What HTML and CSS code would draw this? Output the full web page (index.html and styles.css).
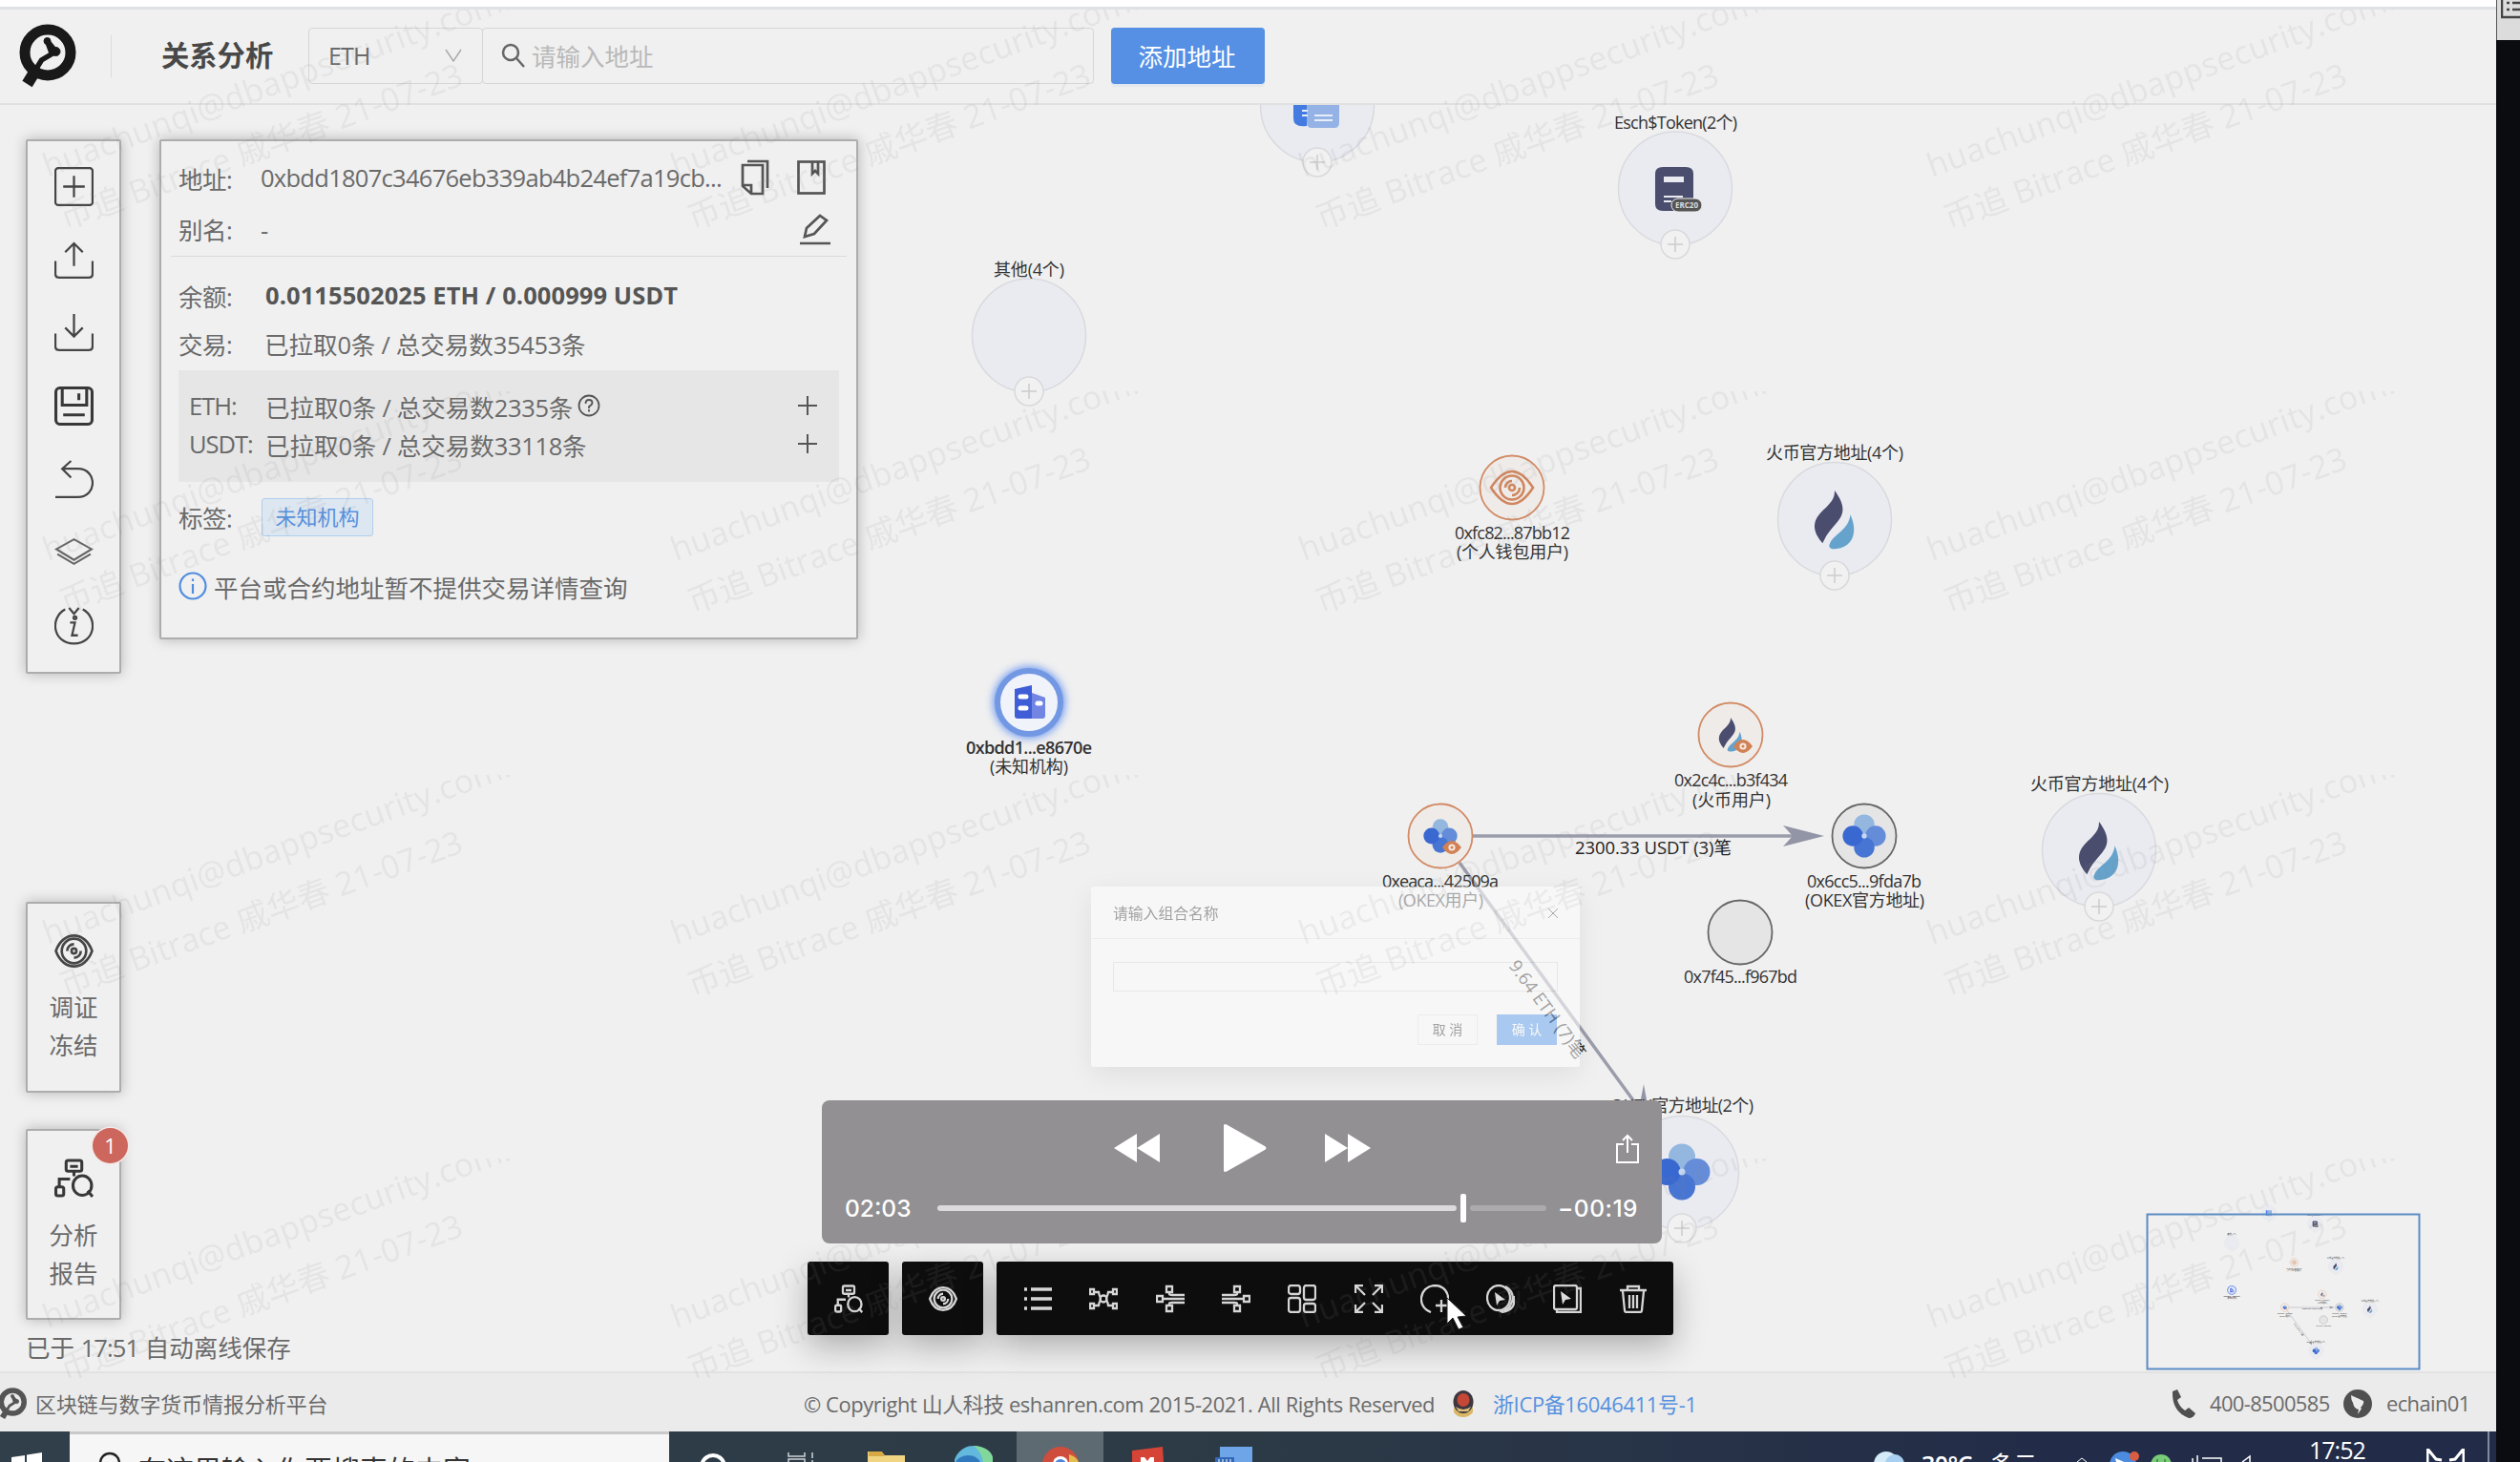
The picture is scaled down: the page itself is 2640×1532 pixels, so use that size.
FILE: index.html
```
<!DOCTYPE html>
<html lang="zh-CN">
<head>
<meta charset="utf-8">
<title>关系分析</title>
<link rel="stylesheet" href="styles.css">
</head>
<body>
<svg class="defs" width="0" height="0" aria-hidden="true">
  <defs>
    <symbol id="i-plusbox" viewBox="0 0 40 40"><rect x="1" y="1" width="38" height="38" rx="3"/><path d="M20 9v22M9 20h22"/></symbol>
    <symbol id="i-upload" viewBox="0 0 40 40"><path d="M1 21v13q0 4 4 4h30q4 0 4-4V21M20 26V3M11 12l9-9 9 9"/></symbol>
    <symbol id="i-download" viewBox="0 0 40 40"><path d="M1 21v13q0 4 4 4h30q4 0 4-4V21M20 1v23M11 15l9 9 9-9"/></symbol>
    <symbol id="i-save" viewBox="0 0 40 40"><rect x="1.5" y="1.5" width="37" height="37" rx="4"/><path d="M8 2v17h25V2M25 7v7M9 29h22"/></symbol>
    <symbol id="i-undo" viewBox="0 0 40 40"><path d="M1 38h23c20 0 20-29 0-29H8M17 1L8 9l9 9"/></symbol>
    <symbol id="i-layers" viewBox="0 0 40 40"><path d="M20 7L38 17 20 28 2 17zM3 22l17 10 17-10"/></symbol>
    <symbol id="i-info" viewBox="0 0 40 40"><path d="M11 3.500C-5 12-2 38 20 38.500 42 38 45 12 29 3.500M15 2l5 6 5-6M16 17h5l-3 13h6"/><circle cx="21" cy="12" r="1.500"/></symbol>
    <symbol id="i-eye" viewBox="0 0 40 40"><path d="M1.500 20C9-1 31-1 38.500 20 31 41 9 41 1.500 20z"/><circle cx="20" cy="20" r="12.500"/><path d="M13 20a7 7 0 0 1 7-7M27 20a7 7 0 0 1-7 7"/><circle cx="20" cy="20" r="2.500"/></symbol>
    <symbol id="i-report" viewBox="0 0 40 40"><rect x="12" y="2" width="16" height="11" rx="2"/><path d="M16 8h8M20 13v5M5 30V21h11M34 33l5 6"/><rect x="1.500" y="29" width="8" height="9" rx="2"/><ellipse cx="28.500" cy="27.500" rx="9.500" ry="10"/></symbol>
    <symbol id="i-copy" viewBox="0 0 30 36"><path d="M2 5h21v30H11l-9-8zM2 26h9v9M7 1h21v28"/></symbol>
    <symbol id="i-book" viewBox="0 0 30 36"><rect x="1.500" y="1.500" width="27" height="33"/><path d="M16 2v12l3-3 3 3V2"/></symbol>
    <symbol id="i-edit" viewBox="0 0 34 34"><path d="M6 24l2-9L22 2l7 5-13 14zM1 31h32"/></symbol>
    <symbol id="i-logo" viewBox="0 0 60 68"><path d="M17 50L9 63" stroke-width="12"/><circle cx="30.500" cy="30" r="24" stroke-width="11"/><path d="M30 18l9 11-15 9-8 13M30 18l4 11 5 1" stroke-width="5.500"/><circle cx="30" cy="18" r="3.500"/><circle cx="39" cy="29" r="4.500"/></symbol>
    <symbol id="n-flame" viewBox="0 0 44 64"><path d="M22 0c16 22 7 29-3 41-6 7-8 12-10 16C-5 41-1 30 13 18c7-7 9-11 9-18z" fill="#4a4d6d"/><path d="M39 26c8 17 4 35-15 37-5 1-10-1-7-6 5-11 20-14 22-31z" fill="#66a3cc"/></symbol>
    <symbol id="n-okex" viewBox="0 0 60 60"><circle cx="30" cy="14.500" r="14" fill="#94b7df"/><circle cx="45.500" cy="30" r="14" fill="#658cd8"/><circle cx="30" cy="45.500" r="14" fill="#4775d3"/><circle cx="14.500" cy="30" r="14" fill="#3968d1"/><circle cx="30" cy="30" r="3.500" fill="#c5d7f2"/></symbol>
    <symbol id="n-eye" viewBox="0 0 20 14"><path d="M0 7q10-14 20 0-10 14-20 0z" fill="#d18154"/><circle cx="10" cy="7" r="3.600" fill="#f6e7de"/><circle cx="10" cy="7" r="1.500" fill="#d18154"/></symbol>
    <symbol id="n-add" viewBox="0 0 32 32"><circle cx="16" cy="16" r="15" fill="#f1f1f2" stroke="#d9d9dc" stroke-width="1.500"/><path d="M16 8v16M8 16h16" stroke="#ccc" stroke-width="1.500"/></symbol>
    <pattern id="wm" width="658" height="402" patternUnits="userSpaceOnUse" y="-2">
      <g class="wm-text">
        <text transform="translate(50 178) rotate(-20)" textLength="556">huachunqi@dbappsecurity.com.cn</text>
        <text transform="translate(68 233) rotate(-20)" textLength="446">币追 Bitrace 戚华春 21-07-23</text>
      </g>
    </pattern>
  </defs>
</svg>

<div class="screen">
  <div class="desktop">
    <div class="chrome-edge"></div>
    <div class="app">
      <header class="header">
        <svg class="logo"><use href="#i-logo"/></svg>
        <i class="sep"></i>
        <h1>关系分析</h1>
        <div class="select"><span>ETH</span><svg viewBox="0 0 18 14" width="18" height="14"><path d="M1 1l8 12 8-12"/></svg></div>
        <div class="search"><svg viewBox="0 0 26 26" width="26" height="26"><circle cx="10" cy="10" r="8"/><path d="M16 16l8 9"/></svg><span>请输入地址</span></div>
        <button class="add">添加地址</button>
      </header>

      <main class="work">
        <svg class="graph" width="2616" height="1327" viewBox="0 110 2616 1327">
          <g id="graph">
            <g class="edge"><path d="M1543 876h350M1529 904L1722 1168"/><path class="head" d="M1911 876l-43-11 10 11-10 11zM1730 1180l-8-44-5 26-18-2z"/></g>
            <g class="label">
              <text class="halo" x="1650" y="895" textLength="164">2300.33 USDT (3)笔</text>
              <text class="halo" transform="translate(1580 1012) rotate(54)" textLength="122">9.64 ETH (7)笔</text>
            </g>
            <g class="group">
              <circle cx="1380" cy="110.500" r="59.500"/><circle cx="1755" cy="197.500" r="59.500"/><circle cx="1078" cy="351.500" r="59.500"/>
              <circle cx="1922" cy="544" r="59.500"/><circle cx="2199" cy="891" r="59.500"/><circle cx="1762" cy="1229" r="59.500"/>
            </g>
            <path d="M1355 88h14v44q-14 2-14-8z" fill="#447be0"/><path d="M1369 88h34v40q0 6-5 6h-24q-5 0-5-6z" fill="#94b2e6"/><path d="M1377 121h19M1377 126h19M1364 116h6M1364 121h6" stroke="#e8eef9" stroke-width="2"/>
            <path d="M1742 175h24q8 0 8 7v32q0 7-8 7h-24q-8 0-8-7v-32q0-7 8-7z" fill="#4a4d6d"/><path d="M1743 185h21v6h-21z" fill="#e8e9f1"/><path d="M1743 206h20M1743 211h8" stroke="#e8e9f1" stroke-width="2"/>
            <rect x="1751" y="208" width="32" height="14" rx="7" fill="#555" stroke="#eee"/><text class="erc" x="1755" y="218" textLength="24">ERC20</text>
            <use href="#n-flame" x="1900" y="514" width="44" height="62"/><use href="#n-flame" x="2177" y="861" width="44" height="62"/>
            <use href="#n-okex" x="1731" y="1198" width="62" height="60"/>
            <g><use href="#n-add" x="1364" y="154" width="32" height="32"/><use href="#n-add" x="1739" y="240" width="32" height="32"/><use href="#n-add" x="1062" y="394" width="32" height="32"/><use href="#n-add" x="1906" y="587" width="32" height="32"/><use href="#n-add" x="2183" y="934" width="32" height="32"/><use href="#n-add" x="1746" y="1271" width="32" height="32"/></g>
            <g class="user"><circle cx="1584" cy="511" r="33.500"/><circle cx="1813" cy="770" r="33.500"/><circle cx="1509" cy="876" r="33.500"/></g>
            <g class="official"><circle cx="1953" cy="876" r="33.500"/><circle cx="1823" cy="977" r="33.500"/></g>
            <g fill="none" stroke="#d0875f" stroke-width="2.600"><path d="M1562 511q22-34 44 0-22 34-44 0z"/><circle cx="1584" cy="511" r="12.500"/><path d="M1577 511a7 7 0 0 1 7-7M1592 511a8 8 0 0 1-8 8"/><circle cx="1584" cy="511" r="3"/></g>
            <use href="#n-flame" x="1798" y="752" width="30" height="36"/><use href="#n-eye" x="1816" y="775" width="20" height="14"/>
            <use href="#n-okex" x="1491" y="858" width="36" height="36"/><use href="#n-eye" x="1511" y="881" width="20" height="14"/>
            <use href="#n-okex" x="1930" y="853" width="46" height="46"/>
            <circle class="glow" cx="1078" cy="736" r="37"/><circle cx="1078" cy="736" r="33" fill="#f1f3fb" stroke="#7398e3" stroke-width="6"/>
            <path d="M1063 722l18-4v35h-15q-3 0-3-3z" fill="#3f5dd6"/><path d="M1081 726l14 5v19q0 3-3 3h-11z" fill="#7285e3"/><path d="M1069 730h6M1069 742h6M1087 737h3" stroke="#fff" stroke-width="5" stroke-linecap="round"/>
            <g class="label">
              <text x="1691" y="135" textLength="129">Esch$Token(2个)</text>
              <text x="1041" y="289" textLength="74">其他(4个)</text>
              <text x="1524" y="565" textLength="121">0xfc82...87bb12</text><text x="1526" y="585" textLength="117">(个人钱包用户)</text>
              <text x="1850" y="481" textLength="144">火币官方地址(4个)</text>
              <text class="strong" x="1012" y="790" textLength="132">0xbdd1...e8670e</text><text x="1037" y="810" textLength="82">(未知机构)</text>
              <text x="1754" y="824" textLength="119">0x2c4c...b3f434</text><text x="1773" y="845" textLength="82">(火币用户)</text>
              <text x="1448" y="930" textLength="122">0xeaca...42509a</text><text x="1465" y="950" textLength="89">(OKEX用户)</text>
              <text x="1893" y="930" textLength="120">0x6cc5...9fda7b</text><text x="1891" y="950" textLength="125">(OKEX官方地址)</text>
              <text x="1764" y="1030" textLength="119">0x7f45...f967bd</text>
              <text x="2127" y="828" textLength="145">火币官方地址(4个)</text>
              <text x="1687" y="1165" textLength="150">OKEX官方地址(2个)</text>
            </g>
          </g>
        </svg>
        <svg class="minimap" width="288" height="176" viewBox="2248 1260 288 176">
          <use href="#graph" transform="translate(2199 1257) scale(.129)"/>
          <rect x="2249.500" y="1272.500" width="285" height="162"/>
        </svg>

        <div class="left">
          <nav class="card tools">
            <svg><use href="#i-plusbox"/></svg><svg><use href="#i-upload"/></svg><svg><use href="#i-download"/></svg><svg class="bold"><use href="#i-save"/></svg><svg><use href="#i-undo"/></svg><svg class="thin"><use href="#i-layers"/></svg><svg><use href="#i-info"/></svg>
          </nav>
          <div class="card act"><svg><use href="#i-eye"/></svg><span>调证<br>冻结</span></div>
          <div class="card act report"><b class="badge">1</b><svg class="bold"><use href="#i-report"/></svg><span>分析<br>报告</span></div>
          <p class="saved">已于 <span class="n">17:51</span> 自动离线保存</p>
        </div>

        <section class="card detail">
          <div class="row r1"><label>地址:</label><span class="addr">0xbdd1807c34676eb339ab4b24ef7a19cb...</span><svg width="30" height="38"><use href="#i-copy"/></svg><svg width="30" height="38"><use href="#i-book"/></svg></div>
          <div class="row r2"><label>别名:</label><span>-</span><svg class="end" width="34" height="34"><use href="#i-edit"/></svg></div>
          <div class="row r3"><label>余额:</label><strong>0.0115502025 ETH / 0.000999 USDT</strong></div>
          <div class="row r4"><label>交易:</label><span>已拉取<i>0</i>条<i> / </i>总交易数<i>35453</i>条</span></div>
          <div class="coins">
            <div class="row"><label>ETH:</label><span>已拉取<i>0</i>条<i> / </i>总交易数<i>2335</i>条</span><svg class="help" viewBox="0 0 24 24" width="24" height="24"><circle cx="12" cy="12" r="10.500"/><path d="M8.500 10q0-4 3.500-4t3.500 3q0 2-3.500 4v2M12 16v2.500"/></svg><svg class="end" viewBox="0 0 22 22" width="22" height="22"><path d="M11 1v20M1 11h20"/></svg></div>
            <div class="row"><label>USDT:</label><span>已拉取<i>0</i>条<i> / </i>总交易数<i>33118</i>条</span><svg class="end" viewBox="0 0 22 22" width="22" height="22"><path d="M11 1v20M1 11h20"/></svg></div>
          </div>
          <div class="row r5"><label>标签:</label><em>未知机构</em></div>
          <div class="row r6"><svg class="blue" viewBox="0 0 30 30" width="30" height="30"><circle cx="15" cy="15" r="13.500"/><path d="M15 13v10M15 7.500v2.500"/></svg><span>平台或合约地址暂不提供交易详情查询</span></div>
        </section>

        <div class="modal">
          <div class="m-head"><span>请输入组合名称</span><svg viewBox="0 0 12 12" width="12" height="12"><path d="M1 1l10 10M11 1L1 11"/></svg></div>
          <div class="m-body"><div class="m-input"></div></div>
          <div class="m-foot"><span>取 消</span><span class="ok">确 认</span></div>
        </div>

        <div class="dock">
          <div class="d-box"><svg class="bold"><use href="#i-report"/></svg></div>
          <div class="d-box"><svg class="bold"><use href="#i-eye"/></svg></div>
          <div class="d-bar">
            <svg viewBox="0 0 30 30"><path stroke-width="3.500" d="M1 5h3M8 5h22M1 15h3M8 15h22M1 25h3M8 25h22"/></svg>
            <svg viewBox="0 0 30 30"><path d="M5 8h5q1 6 3 6M25 8h-5q-1 6-3 6M5 22h5q1-6 3-6M25 22h-5q-1-6-3-6"/><circle cx="15" cy="15" r="3.500"/><path d="M1 5h4v5H1zM25 5h4v5h-4zM1 20h4v5H1zM25 20h4v5h-4z"/></svg>
            <svg viewBox="0 0 30 30"><path d="M1 12h6v6H1zM11 2h6v6h-6zM11 22h6v6h-6zM7 15h23M14 8v2q0 1 3 1h13M14 22v-2q0-1 3-1h13"/></svg>
            <svg viewBox="0 0 30 30"><path d="M23 12h6v6h-6zM13 2h6v6h-6zM13 22h6v6h-6zM23 15H0M16 8v2q0 1-3 1H0M16 22v-2q0-1-3-1H0"/></svg>
            <svg viewBox="0 0 30 30"><rect x="1" y="1" width="12" height="9" rx="2.500"/><rect x="17" y="1" width="12" height="15" rx="2.500"/><rect x="1" y="14" width="12" height="15" rx="2.500"/><rect x="17" y="20" width="12" height="9" rx="2.500"/></svg>
            <svg viewBox="0 0 30 30"><path d="M1 9V1h8M1 1l10 10M21 1h8v8M29 1L19 11M1 21v8h8M1 29l10-10M29 21v8h-8M29 29L19 19"/></svg>
            <svg viewBox="0 0 30 30"><path d="M11 29C-4 24-2 2 15 1c10 0 15 8 14 16M22 16v13M16 22h13"/></svg>
            <svg viewBox="0 0 30 30"><ellipse cx="13" cy="14" rx="12" ry="13"/><path d="M20 2q10 6 7 16-4 11-13 10M16 29q16-2 13-17"/><path class="fill" d="M9 8l11 8-6 1-3 5z"/></svg>
            <svg viewBox="0 0 30 30"><rect x="1" y="1" width="24" height="25" rx="2"/><path d="M26 4h3v25H4v-3"/><path class="fill" d="M8 7l11 8-6 1-3 5z"/></svg>
            <svg viewBox="0 0 30 30"><path d="M1 6h28M9 6V2h12v4M4 7l2 20q0 2 2 2h14q2 0 2-2l2-20M11 11v14M15 11v14M19 11v14"/></svg>
          </div>
        </div>
      </main>

      <footer class="footer">
        <svg class="f-logo"><use href="#i-logo"/></svg><span class="f-name">区块链与数字货币情报分析平台</span>
        <span class="f-copy">© Copyright 山人科技 eshanren.com 2015-2021. All Rights Reserved</span>
        <svg class="emblem" viewBox="0 0 24 28" width="24" height="28"><path d="M2 18q10 6 20 0v5q-4 5-10 5T2 23z" fill="#d9b765"/><ellipse cx="12" cy="12" rx="10.500" ry="12" fill="#3f3740"/><ellipse cx="12" cy="10" rx="6.500" ry="7" fill="#c44835"/><path d="M4 17q8 6 16 0l-3 5H7z" fill="#e0c27a"/></svg>
        <a>浙ICP备16046411号-1</a>
        <svg class="phone" viewBox="0 0 26 30" width="26" height="30"><path d="M1 2l5-2 4 8-4 3q2 7 8 11l4-3 7 6q-2 5-7 5Q0 23 1 2z"/></svg><span class="f-tel">400-8500585</span>
        <svg class="ding" viewBox="0 0 30 30" width="30" height="30"><circle cx="15" cy="15" r="15"/><path fill="#ececec" d="M8 6q9 4 13 6 1 3-3 7l1 1-4 6 1-5q-5-1-6-7-2-3-2-8z"/></svg><span class="f-id">echain01</span>
      </footer>
      <svg class="watermark" width="2616" height="1442"><rect width="2616" height="1442" fill="url(#wm)"/></svg>
    </div>

    <div class="taskbar">
      <div class="start"><svg viewBox="0 0 32 32" width="32" height="32"><path d="M0 5l14-2v13H0zM16 2.500L32 0v16H16z" fill="#fff"/></svg></div>
      <div class="t-search"><svg viewBox="0 0 26 26" width="26" height="26"><circle cx="14" cy="12" r="10"/></svg><span>在这里输入你要搜索的内容</span></div>
      <div class="apps">
        <span><svg viewBox="0 0 40 17"><circle cx="20" cy="22" r="12" fill="none" stroke="#fff" stroke-width="4"/></svg></span>
        <span><svg viewBox="0 0 40 17"><path d="M8 7v4h17V7M8 17v-3h17v3M33 7v6M33 15v2" fill="none" stroke="#cfd4d8" stroke-width="1.500"/></svg></span>
        <span><svg viewBox="0 0 40 17"><path d="M0 17V6h14l4 4h21v7z" fill="#f1d583"/><path d="M1 6h14l3 5H1z" fill="#d7aa45"/></svg></span>
        <span><svg viewBox="0 0 40 17"><circle cx="20" cy="21" r="21" fill="#62b9dd"/><path d="M20 0q20 1 21 17H30Q28 6 20 0z" fill="#82d79b"/><ellipse cx="14" cy="19" rx="13" ry="9" fill="#3179bd"/></svg></span>
        <span class="on"><svg viewBox="0 0 40 17"><circle cx="20" cy="20" r="19" fill="#cf4d3d"/><path d="M29 9q9 3 10 9H29z" fill="#e2bd4e"/><circle cx="20" cy="19" r="8" fill="#fff"/><circle cx="20" cy="20" r="6" fill="#4d85dc"/></svg></span>
        <span><svg viewBox="0 0 40 17"><path d="M4 5l32-4 1 16H4z" fill="#d54436"/><path d="M13 17v-5h4l3 4 3-4h4v5z" fill="#fff"/></svg></span>
        <span><svg viewBox="0 0 40 17"><path d="M5 1h34v16H5z" fill="#6ea5e8"/><path d="M0 12h20v5H0z" fill="#3368b8"/><path d="M4 14v3M8 14v3M12 14v3M16 14v3" stroke="#fff"/></svg></span>
      </div>
      <div class="tray">
        <svg viewBox="0 0 34 12" width="34" height="12"><circle cx="15" cy="14" r="13" fill="#d5ebf8"/><circle cx="24" cy="14" r="10" fill="#a9cff0"/></svg>
        <span class="temp"><b>30°C</b>多云</span>
        <svg class="mini" viewBox="0 0 190 12" width="190" height="12"><path d="M2 12l5-4 5 4" fill="none" stroke="#fff"/><circle cx="50" cy="15" r="14" fill="#4b8be0"/><path d="M42 8l14 6-12 2z" fill="#fff"/><circle cx="62" cy="6" r="5" fill="#d85e43"/><circle cx="90" cy="15" r="11" fill="#78cc78"/><path d="M86 9v3M94 9v3" stroke="#285b2b"/><path d="M123 8v4M128 5v7M133 8h20v4M175 12l8-6v6" fill="none" stroke="#fff" stroke-width="1.500"/></svg>
        <span class="clock">17:52</span>
        <svg class="bell" viewBox="0 0 40 14" width="40" height="14"><path d="M1 14V0l9 11 6 1M39 14V0l-9 11-6 1" fill="none" stroke="#fff" stroke-width="3"/></svg>
      </div>
    </div>
  </div>
  <aside class="side"><div><svg viewBox="0 0 20 24" width="20" height="24"><path d="M20 -2H1v20h19M6 3h3M12 3h8M6 10h3M12 10h8" fill="none" stroke="#444" stroke-width="2.500"/></svg></div></aside>

  <div class="player">
    <div class="p-top">
      <svg width="48" height="30" viewBox="0 0 48 30"><path d="M24 0v30L0 15zM48 0v30L24 15z"/></svg>
      <svg width="46" height="50" viewBox="0 0 46 50"><path d="M1 1q1-2 4 0l39 22q3 2 0 4L5 49q-3 2-4 0z"/></svg>
      <svg width="48" height="30" viewBox="0 0 48 30"><path d="M0 0v30l24-15zM24 0v30l24-15z"/></svg>
      <svg class="share" width="24" height="31" viewBox="0 0 24 31"><path d="M8 11H1v19h22V11h-7M12 20V2M7 7l5-5 5 5"/></svg>
    </div>
    <div class="p-bar"><span>02:03</span><div class="track"><i class="done"></i><i class="knob"></i><i class="rest"></i></div><span>−00:19</span></div>
  </div>
  <svg class="cursor" width="24" height="36" viewBox="0 0 24 36"><path d="M2 1v27l6-6 6 12 5-2-6-11 9-1z" fill="#fff" stroke="#222"/></svg>
</div>
</body>
</html>
```

FILE: styles.css
```
* { box-sizing: border-box; }
body { margin: 0; background: #f0f0f0; font-family: "Open Sans", "Noto Sans CJK SC", sans-serif; color: #6a6a6a; }
svg { display: block; flex: none; }
i, em { font-style: normal; }
p, h1 { margin: 0; }
.defs { position: absolute; }
.screen { position: relative; display: flex; width: 2640px; height: 1532px; overflow: hidden; }
.desktop { display: flex; flex-direction: column; width: 2616px; }
.side { flex: 1; background: #0b0c10; }
.side div { height: 42px; background: #dcdcdc; border-left: 1px solid #555; padding-left: 4px; }
.chrome-edge { height: 10px; background: #fff; border-bottom: 3px solid #dfe1e4; }
.app { position: relative; height: 1490px; display: flex; flex-direction: column; }
.watermark { position: absolute; left: 0; top: 0; pointer-events: none; }
.wm-text { font-family: "Open Sans", "Noto Sans CJK SC", sans-serif; font-size: 34px; fill: rgba(128, 128, 128, .115); }

.header { height: 100px; display: flex; align-items: center; padding: 0 0 1px 19px; border-bottom: 2px solid #e0e0e0; }
.logo { width: 61px; height: 68px; fill: #191919; stroke: #191919; }
#i-logo circle:nth-of-type(1) { fill: none; }
.logo, .f-logo { overflow: visible; }
#i-logo path { fill: none; }
.sep { width: 1px; height: 44px; background: #dcdcdc; margin: 0 52px 0 36px; }
h1 { font-size: 29.300px; line-height: 40px; width: 154px; color: #484848; font-weight: 700; padding-bottom: 2px; }
.select { width: 183px; height: 59px; border: 1.500px solid #d6d6d6; border-radius: 4px; display: flex; align-items: center; justify-content: space-between; padding: 0 21px 1px 20px; font-size: 25px; letter-spacing: -.8px; }
.select svg, .search svg { fill: none; stroke: #aaa; stroke-width: 1.500; }
.search svg { stroke: #666; stroke-width: 2.500; }
.search { width: 641px; height: 59px; margin-left: -1px; border: 1.500px solid #d6d6d6; border-radius: 4px; display: flex; align-items: center; gap: 6px; padding: 0 0 2px 19px; font-size: 25.500px; color: #b9b9b9; }
.add { width: 161px; height: 59px; margin-left: 18px; border: 0; border-radius: 4px; background: #5690e4; color: #fff; font: 25.500px "Noto Sans CJK SC", sans-serif; box-shadow: 0 3px 1px #e3e7ee; padding: 0 2px 3px 0; }

.work { position: relative; height: 1327px; display: flex; padding-left: 27px; }
.graph { position: absolute; left: 0; top: 0; }
.minimap { position: absolute; left: 2248px; top: 1150px; }
.minimap rect { fill: none; stroke: #5c8cc4; stroke-width: 2; }
.edge { fill: none; stroke: #9b9dab; stroke-width: 3.500; }
.edge .head { fill: #9295a6; stroke: none; }
.group circle { fill: #eaebf1; stroke: #d9dadf; stroke-width: 1.500; }
.user circle { fill: #efebe8; stroke: #d28b66; stroke-width: 1.800; }
.official circle { fill: #e5e5e5; stroke: #666; stroke-width: 1.800; }
.glow { fill: #5a8bf0; filter: blur(5px); }
.label { font-size: 18px; fill: #333; }
.label .strong { font-weight: 600; font-size: 18px; }
.label .halo { fill: #222; font-size: 18.500px; }
.erc { font-size: 8px; font-weight: 700; fill: #ddd; }

.card { background: #f0f0f0; border: 2px solid #adadad; border-radius: 2px; box-shadow: 0 0 14px rgba(0, 0, 0, .25); position: relative; }
.left { width: 100px; padding-top: 36px; }
.left .card > svg { width: 41px; height: 41px; fill: none; stroke: #454545; stroke-width: 2.200; }
.left .card > svg.bold { stroke-width: 3; stroke: #383838; }
.left .card > svg.thin { stroke-width: 2; stroke: #666; }
.tools { height: 560px; display: flex; flex-direction: column; align-items: center; gap: 35.700px; padding-top: 27px; }
.act { height: 200px; margin-top: 239px; display: flex; flex-direction: column; align-items: center; font-size: 25.500px; line-height: 40px; padding-top: 29px; gap: 19px; }
.report { margin-top: 38px; }
.left .act:not(.report) svg { stroke-width: 2.600; margin-bottom: -1px; }
.badge { position: absolute; right: -9px; top: -3px; width: 37px; height: 37px; border-radius: 50%; background: #cd675d; color: #fff; font-size: 22px; font-weight: 400; line-height: 37px; text-align: center; box-shadow: 0 0 0 1.500px #f3e9e8; }
.saved { white-space: nowrap; font-size: 25.500px; line-height: 40px; margin-top: 9px; }
.n { letter-spacing: -.9px; white-space: pre; }
.row i { letter-spacing: -.35px; white-space: pre; }

.detail { width: 732px; height: 524px; margin: 36px 0 0 40px; padding: 0 10px; font-size: 25.500px; display: flex; flex-direction: column; }
.row { display: flex; align-items: center; padding-left: 8px; white-space: nowrap; }
.row label { width: 91px; flex: none; letter-spacing: -.5px; }
.row svg { fill: none; stroke: #555; stroke-width: 2.700; }
.r1 { height: 76px; }
.r1 label, .r2 label, .r5 label { width: 87px; }
.addr { width: 503px; letter-spacing: -.72px; }
.r1 svg + svg { margin-left: 29px; }
.row .end { margin-left: auto; }
.r2 { height: 45px; border-bottom: 1.500px solid #dadada; padding: 0 16px 11px 8px; align-items: flex-start; line-height: 34px; }
.r3 { height: 80px; }
.r3 strong { font-size: 25.500px; color: #555; letter-spacing: .08px; }
.r4 { height: 20px; margin-bottom: 19px; }
.coins { height: 117px; background: #e6e6e6; margin: 0 8px 0 8px; padding: 17px 0; }
.coins .row { height: 40px; padding: 0 22px 0 11px; }
.row label + span { margin-left: -1px; }
.coins label { width: 81px; letter-spacing: -1px; }
.coins .end { stroke-width: 2; }
.row .help { stroke-width: 1.800; margin-left: 5px; }
.r5 { height: 73px; }
.r5 em { width: 117px; height: 40px; background: #dde7f1; border: 1.500px solid #b0cfec; border-radius: 3px; color: #5691df; font-size: 22px; line-height: 36px; text-align: center; }
.r6 { height: 72px; gap: 7px; }
.row .blue { stroke: #508ddf; stroke-width: 2.200; }

.modal { position: absolute; left: 1143px; top: 819px; width: 512px; height: 189px; background: #fdfdfd; opacity: .58; box-shadow: 0 8px 30px rgba(0, 0, 0, .13); border-radius: 3px; font-size: 15.800px; padding-top: 1px; }
.m-head { height: 54px; display: flex; align-items: center; justify-content: space-between; padding: 0 22px 0 23px; border-bottom: 1px solid #eaeaea; }
.m-head svg { stroke: #777; fill: none; }
.m-body { padding: 24px 23px; }
.m-input { height: 31px; border: 1.500px solid #e3e3e3; }
.m-foot { display: flex; justify-content: flex-end; gap: 20px; padding-right: 24px; }
.m-foot span { width: 63px; height: 32px; border: 1.500px solid #eaeaea; line-height: 29px; text-align: center; font-size: 14px; }
.m-foot .ok { background: #78aef0; color: #fff; border: 0; line-height: 32px; }

.dock { position: absolute; left: 846px; top: 1212px; display: flex; gap: 14px; }
.dock > div { height: 77px; width: 85px; background: #0d0d0d; border-radius: 3px; box-shadow: 0 12px 34px rgba(0, 0, 0, .28); display: flex; align-items: center; justify-content: center; }
.dock > .d-bar { width: 709px; justify-content: space-between; padding: 0 27px 0 28px; }
.dock svg { width: 30px; height: 30px; fill: none; stroke: #d6d6d6; stroke-width: 2.300; }
.dock svg.bold { stroke-width: 3.100; }
.dock .fill { fill: #ddd; stroke: none; }

.footer { height: 63px; background: #ebebeb; border-top: 2px solid #e2e2e2; display: flex; align-items: center; font-size: 21.900px; white-space: nowrap; padding-top: 2px; }
.f-logo { width: 30px; height: 34px; margin-left: -2px; fill: #555; stroke: #555; }
.f-name { width: 814px; padding-left: 9px; }
.f-copy { width: 669px; letter-spacing: -.4px; }
.emblem { margin: 0 19px 0 10px; }
.footer a { color: #5691df; letter-spacing: -.3px; width: 711px; }
.phone, .ding { fill: #505050; }
.f-tel { width: 140px; margin-left: 14px; letter-spacing: -.6px; }
.f-id { margin-left: 15px; letter-spacing: -.6px; }

.taskbar { height: 32px; overflow: hidden; display: flex; background: linear-gradient(90deg, #303f49 0%, #2c3a46 50%, #222c48 82%, #222c48); color: #fff; }
.start { width: 73px; padding: 22px 0 0 12px; }
.t-search { width: 628px; height: 60px; background: #f6f6f6; border-top: 3px solid #c9c9c9; padding: 18px 0 0 28px; display: flex; gap: 18px; color: #333; font-size: 29px; line-height: 40px; }
.t-search svg { fill: none; stroke: #222; stroke-width: 2.500; }
.apps { display: flex; }
.apps span { width: 91px; height: 32px; display: flex; justify-content: center; padding-top: 15px; }
.apps svg { width: 40px; height: 17px; overflow: hidden; }
.apps .on { background: #5e6a71; }
.tray { display: flex; margin-left: auto; align-items: flex-start; border-right: 2px solid #838a9b; margin-right: 7px; height: 32px; padding-right: 24px; }
.tray > svg:first-child { margin-top: 20px; }
.temp { margin: 16px 0 0 18px; font-size: 25px; line-height: 36px; width: 161px; white-space: nowrap; }
.temp b { font-weight: 600; letter-spacing: -.5px; margin-right: 18px; }
.mini { margin-top: 20px; }
.clock { font-size: 25px; letter-spacing: -1px; line-height: 36px; margin: 1px 0 0 55px; width: 123px; }
.bell { margin-top: 18px; }

.player { position: absolute; left: 861px; top: 1153px; width: 880px; height: 150px; border-radius: 8px; background: #929092; color: #fff; padding: 25px 24px 0; z-index: 2; }
.player svg { fill: #fff; }
.p-top { height: 50px; display: flex; align-items: center; padding-left: 282px; gap: 66px; }
.p-top svg:nth-child(3) { margin-left: -5px; }
.player .share { fill: none; stroke: #fff; stroke-width: 2; margin: 0 0 0 auto; }
.p-bar { display: flex; align-items: center; height: 76px; font: 500 24.500px Inter, sans-serif; white-space: nowrap; }
.p-bar > span:first-child { width: 97px; }
.p-bar > span:last-child { letter-spacing: .5px; }
.track { width: 638px; flex: none; display: flex; align-items: center; gap: 4px; margin-right: 12px; }
.done { width: 544px; height: 6px; border-radius: 3px; background: #dcdadc; }
.knob { width: 6px; height: 30px; border-radius: 2px; background: #fff; }
.rest { flex: 1; height: 6px; border-radius: 3px; background: #acaaac; }
.cursor { position: absolute; left: 1514px; top: 1359px; z-index: 3; }
```
